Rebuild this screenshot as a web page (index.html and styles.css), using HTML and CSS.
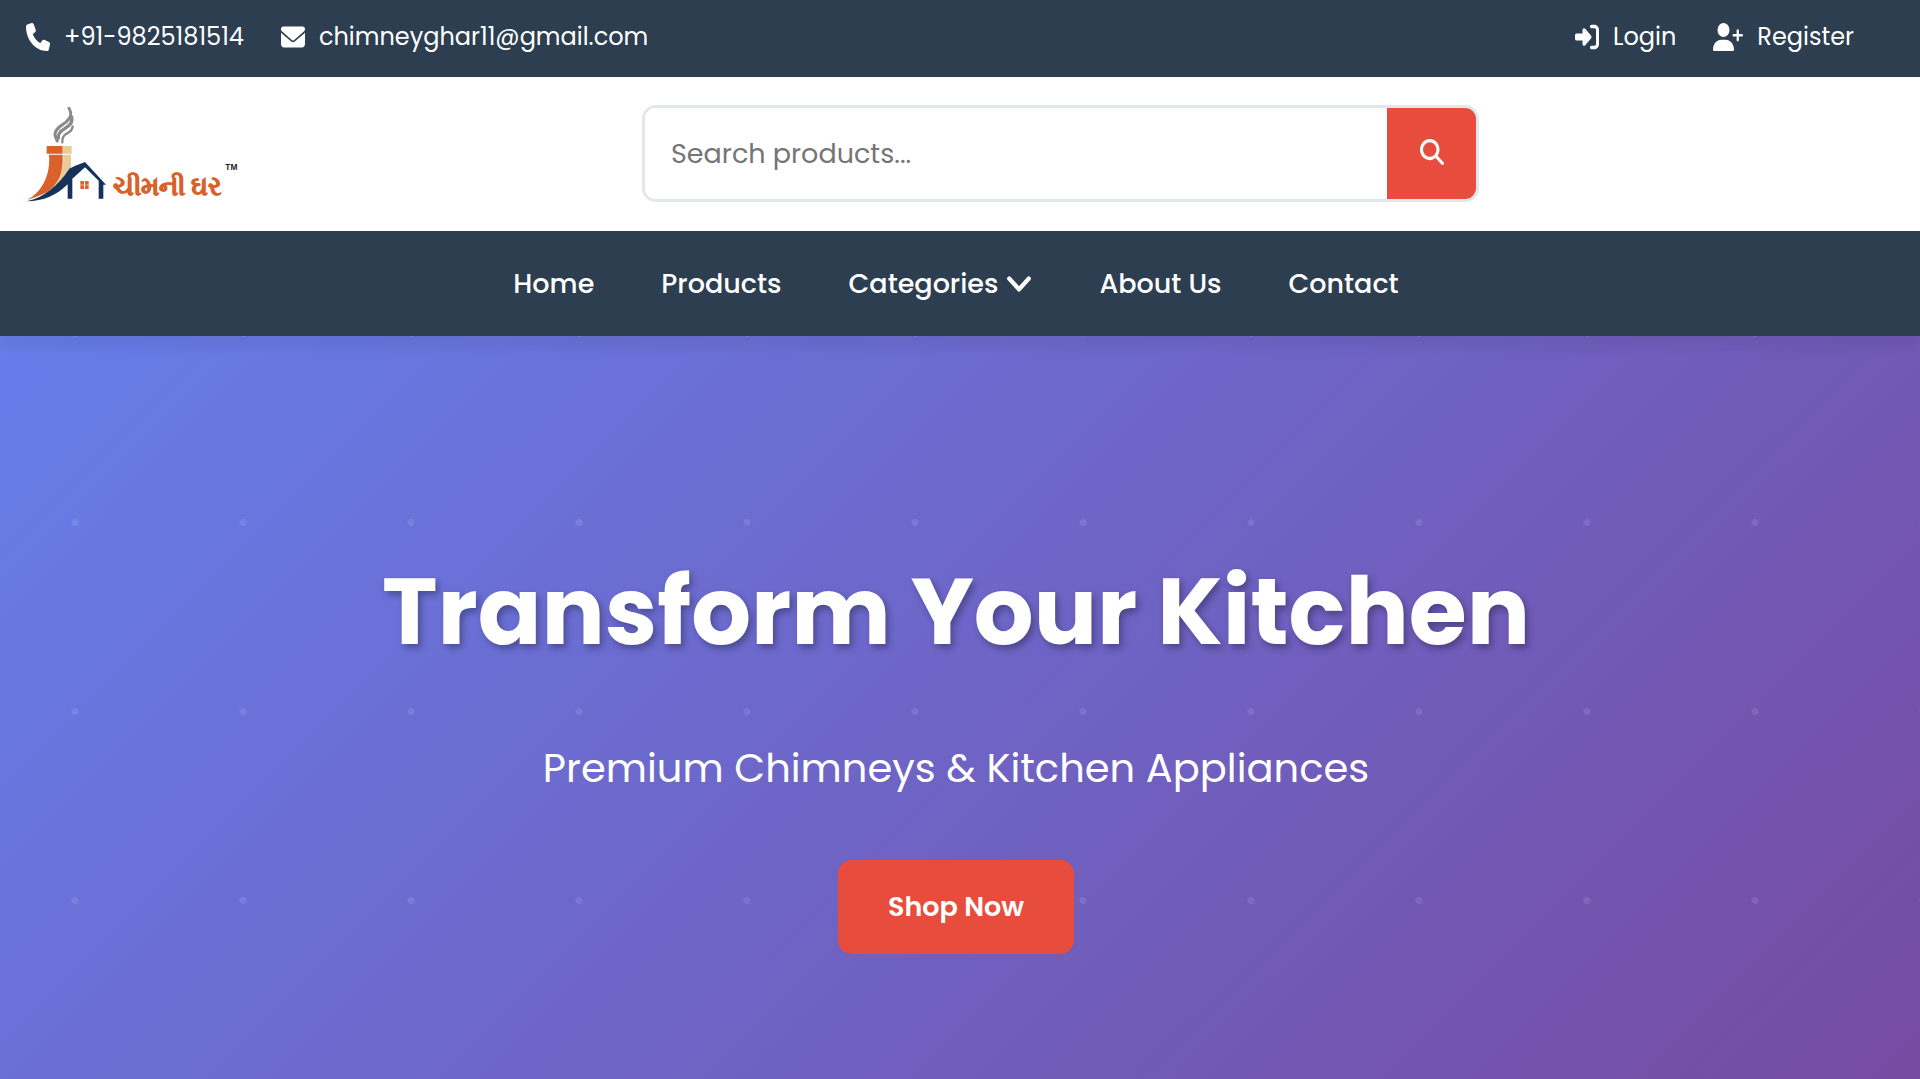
FILE: index.html
```html
<!DOCTYPE html>
<html lang="en">
<head>
    <meta charset="UTF-8">
    <meta name="viewport" content="width=device-width, initial-scale=1.0">
    <title>Chimney Ghar</title>
    <link rel="stylesheet" href="styles.css">
</head>
<body>
    <!-- top bar -->
    <div class="top-bar">
        <div class="contact-info">
            <a href="tel:+919825181514">
                <svg class="icon" viewBox="0 0 512 512" preserveAspectRatio="none" aria-hidden="true"><path d="M164.900 24.600c-7.700-18.600-28-28.500-47.400-23.200l-88 24C12.100 30.200 0 46 0 64c0 247.400 200.600 448 448 448 18 0 33.800-12.100 38.600-29.500l24-88c5.300-19.400-4.600-39.700-23.200-47.400l-96-40c-16.300-6.800-35.200-2.100-46.300 11.600L304.700 368C234.300 334.700 177.300 277.700 144 207.300l49.300-40.300c13.700-11.200 18.400-30 11.600-46.300l-40-96z"/></svg>
                +91-9825181514
            </a>
            <a href="mailto:chimneyghar11@gmail.com">
                <svg class="icon" viewBox="0 0 512 512" preserveAspectRatio="none" aria-hidden="true"><path d="M48 64C21.500 64 0 85.500 0 112c0 15.100 7.100 29.300 19.200 38.400l217.600 163.200c11.400 8.500 27 8.500 38.400 0l217.600-163.200C504.900 141.300 512 127.100 512 112c0-26.500-21.500-48-48-48H48zM0 176v208c0 35.300 28.700 64 64 64h384c35.300 0 64-28.700 64-64V176L294.400 339.200c-22.800 17.100-54 17.100-76.800 0L0 176z"/></svg>
                chimneyghar11@gmail.com
            </a>
        </div>
        <div class="user-actions">
            <a href="#login">
                <svg class="icon" viewBox="0 0 512 512" preserveAspectRatio="none" aria-hidden="true"><path d="M217.900 105.900 340.700 228.700c7.200 7.200 11.300 17.100 11.300 27.300s-4.100 20.100-11.300 27.300L217.900 406.100c-6.400 6.400-15 9.900-24 9.900-18.700 0-33.900-15.200-33.900-33.900V320H32c-17.700 0-32-14.300-32-32v-64c0-17.700 14.300-32 32-32h128v-62.100c0-18.700 15.200-33.900 33.900-33.900 9 0 17.600 3.600 24 9.900zM352 416h64c17.700 0 32-14.300 32-32V128c0-17.700-14.300-32-32-32h-64c-17.700 0-32-14.300-32-32s14.300-32 32-32h64c53 0 96 43 96 96v256c0 53-43 96-96 96h-64c-17.700 0-32-14.300-32-32s14.300-32 32-32z"/></svg>
                Login
            </a>
            <a href="#register">
                <svg class="icon icon-wide" viewBox="0 0 640 512" preserveAspectRatio="none" aria-hidden="true"><path d="M96 128a128 128 0 1 1 256 0 128 128 0 1 1-256 0zM0 482.300C0 383.800 79.800 304 178.300 304h91.400C368.200 304 448 383.800 448 482.300c0 16.400-13.300 29.700-29.700 29.700H29.700C13.300 512 0 498.700 0 482.300zM504 312v-64h-64c-13.300 0-24-10.700-24-24s10.700-24 24-24h64v-64c0-13.300 10.700-24 24-24s24 10.700 24 24v64h64c13.300 0 24 10.700 24 24s-10.700 24-24 24h-64v64c0 13.300-10.700 24-24 24s-24-10.700-24-24z"/></svg>
                Register
            </a>
        </div>
    </div>

    <!-- logo and search -->
    <header class="main-header">
        <a class="logo" href="#home" aria-label="Chimney Ghar">
            <svg viewBox="18 17 645 288" aria-hidden="true">
                <!-- smoke -->
                <g fill="none" stroke="#8a8a8a" stroke-linecap="round">
                    <path stroke-width="9" d="M147 24c12 20 2 32-10 42-16 12-32 20-32 36 0 8 4 14 7 20"/>
                    <path stroke-width="10" d="M155 50c4 18-8 26-20 34-14 8-22 16-20 30"/>
                    <path stroke-width="7" d="M158 78c0 14-10 17-20 23-8 5-12 12-11 25"/>
                </g>
                <!-- chimney -->
                <path fill="#d9622b" d="M80 137h48v23H80zM87 163h41c2 42-6 74-26 96-16 17-44 28-80 40 44-26 70-74 65-136z"/>
                <path fill="#e9cb97" d="M128 137h27v23h-27zM130 163h23v46c-2 10-6 17-13 25-18 20-40 36-66 46 42-26 58-66 56-117z"/>
                <!-- house -->
                <path fill="#15325c" d="M20 303c54-14 92-44 128-98l16-8 31-12 63 68h-8v42h-14v-54l-41-40-38 34v60h-14v-43c-32 32-72 51-123 51z"/>
                <path fill="#d9622b" d="M181 242h11v11h-11zM195 242h11v11h-11zM181 255h11v11h-11zM195 255h11v11h-11z"/>
                <text class="logo-name" x="279" y="284">ચીમની ઘર</text>
                <text class="logo-tm" x="616" y="210">TM</text>
            </svg>
        </a>
        <form class="search-box" role="search">
            <input type="search" name="q" placeholder="Search products..." aria-label="Search products">
            <button type="submit" aria-label="Search">
                <svg viewBox="0 0 512 512" preserveAspectRatio="none" aria-hidden="true"><path d="M416 208c0 45.900-14.900 88.300-40 122.700l126.600 126.700c12.500 12.500 12.500 32.800 0 45.300s-32.800 12.500-45.300 0L330.700 376C296.300 401.100 253.900 416 208 416 93.100 416 0 322.900 0 208S93.100 0 208 0s208 93.100 208 208zM208 352a144 144 0 1 0 0-288 144 144 0 1 0 0 288z"/></svg>
            </button>
        </form>
    </header>

    <!-- navigation -->
    <nav class="navbar">
        <ul>
            <li><a href="#home">Home</a></li>
            <li><a href="#products">Products</a></li>
            <li><a href="#categories">Categories <svg viewBox="0 0 24 24" aria-hidden="true"><path d="M3 7l9 10 9-10"/></svg></a></li>
            <li><a href="#about">About Us</a></li>
            <li><a href="#contact">Contact</a></li>
        </ul>
    </nav>

    <!-- hero -->
    <section class="hero">
        <h1>Transform Your Kitchen</h1>
        <p>Premium Chimneys &amp; Kitchen Appliances</p>
        <a class="btn" href="#products">Shop Now</a>
    </section>
</body>
</html>
```
FILE: styles.css
```css
* {
    margin: 0;
    padding: 0;
    box-sizing: border-box;
}

body {
    min-height: 100vh;
    display: flex;
    flex-direction: column;
    font-family: Poppins, Inter, sans-serif;
    color: #fff;
    background: #fff;
}

a {
    color: inherit;
    text-decoration: none;
}

/* top bar */
.top-bar {
    display: flex;
    justify-content: space-between;
    padding: 14px 66px 18px 26px;
    background: #2c3e50;
    font-size: 24px;
    line-height: 45px;
}

.contact-info,
.user-actions {
    display: flex;
    gap: 37px;
}

.top-bar a {
    display: flex;
    align-items: center;
    gap: 14px;
}

.icon {
    width: 24px;
    height: 28px;
    fill: #fff;
}

.icon-wide {
    width: 30px;
}

/* logo and search */
.main-header {
    display: flex;
    align-items: center;
    padding: 28px 40px 29px 26px;
}

.logo svg {
    display: block;
    width: 215px;
    height: 96px;
    overflow: visible;
}

.logo-name {
    fill: #d9622b;
    stroke: #d9622b;
    stroke-width: 2;
    font-size: 78px;
    font-weight: 700;
}

.logo-tm {
    fill: #222;
    font-family: "Liberation Sans", sans-serif;
    font-size: 25px;
    font-weight: 700;
}

.search-box {
    flex: 0 1 837px;
    display: flex;
    height: 97px;
    margin: 0 auto;
    border: 3px solid #e1e8ed;
    border-radius: 14px;
    overflow: hidden;
}

.search-box input {
    flex: 1;
    min-width: 0;
    padding: 0 26px;
    border: none;
    outline: none;
    font-family: inherit;
    font-size: 27px;
}

.search-box input::placeholder {
    color: #757575;
}

.search-box button {
    width: 89px;
    border: none;
    background: #e74c3c;
    cursor: pointer;
}

.search-box svg {
    width: 24px;
    height: 26px;
    fill: #fff;
}

/* navigation */
.navbar {
    position: relative;
    background: #2c3e50;
    box-shadow: 0 12px 12px rgba(0, 0, 0, 0.06);
}

.navbar ul {
    display: flex;
    justify-content: center;
    gap: 67px;
    padding-right: 8px;
    list-style: none;
}

.navbar a {
    display: flex;
    align-items: center;
    gap: 8px;
    font-size: 27px;
    font-weight: 500;
    line-height: 105px;
}

.navbar svg {
    width: 26px;
    height: 26px;
    fill: none;
    stroke: #fff;
    stroke-width: 4;
    stroke-linecap: round;
    stroke-linejoin: round;
}

/* hero */
.hero {
    flex: 1;
    display: flex;
    flex-direction: column;
    align-items: center;
    padding: 213px 8px 120px 0;
    background:
        radial-gradient(circle at center, rgba(255, 255, 255, 0.1) 3px, transparent 4px) -9px 92px / 168px 189px,
        linear-gradient(135deg, #667eea 0%, #764ba2 100%);
    text-align: center;
}

.hero h1 {
    font-size: 94px;
    font-weight: 700;
    line-height: 124px;
    text-shadow: 3px 4px 7px rgba(0, 0, 0, 0.3);
}

.hero p {
    margin: 59px 0 56px;
    font-size: 40px;
    line-height: 72px;
}

.btn {
    padding: 24px 50px;
    border-radius: 14px;
    background: #e74c3c;
    font-size: 27px;
    font-weight: 600;
    line-height: 46px;
}
```
